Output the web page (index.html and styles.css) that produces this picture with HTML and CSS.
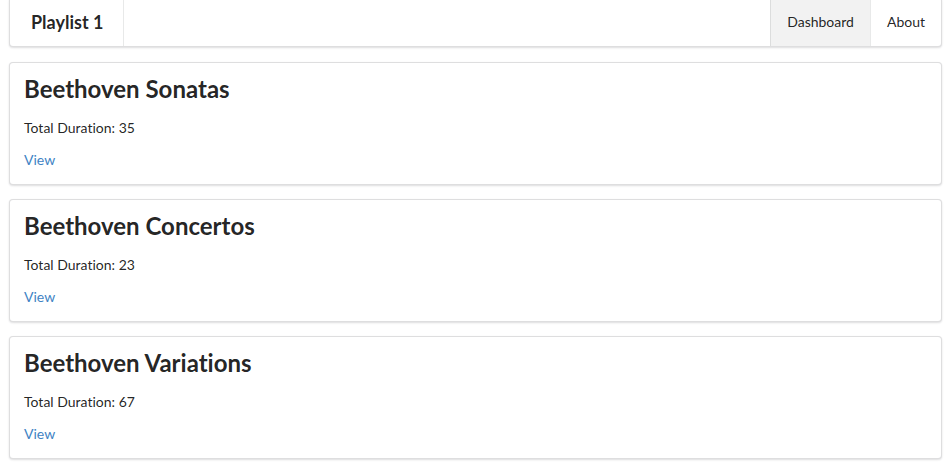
FILE: index.html
```html
<!DOCTYPE html>
<html lang="en">
<head>
  <meta charset="UTF-8">
  <meta name="viewport" content="width=device-width, initial-scale=1.0">
  <title>Playlist 1</title>
  <link rel="stylesheet" href="styles.css">
</head>
<body>
  <nav class="menu">
    <a class="item header-item" href="#">Playlist 1</a>
    <div class="menu-right">
      <a class="item active" href="#">Dashboard</a>
      <a class="item" href="#">About</a>
    </div>
  </nav>

  <!-- One segment per playlist -->
  <section class="segment">
    <h2 class="title">Beethoven Sonatas</h2>
    <p class="duration">Total Duration: 35</p>
    <a class="link" href="#">View</a>
  </section>

  <section class="segment">
    <h2 class="title">Beethoven Concertos</h2>
    <p class="duration">Total Duration: 23</p>
    <a class="link" href="#">View</a>
  </section>

  <section class="segment">
    <h2 class="title">Beethoven Variations</h2>
    <p class="duration">Total Duration: 67</p>
    <a class="link" href="#">View</a>
  </section>
</body>
</html>
```

FILE: styles.css
```css
body {
  margin: 0;
  padding: 0 8px 0 9px;
  background: #fff;
  font-family: Lato, "Helvetica Neue", Arial, sans-serif;
  font-size: 14px;
  line-height: 1.4285em;
  color: rgba(0,0,0,0.87);
  font-variant-ligatures: none;
}
.menu {
  display: flex;
  margin: -3px 0 15px;
  background: #fff;
  border: 1px solid rgba(34,36,38,0.15);
  border-radius: 4px;
  box-shadow: 0 1px 2px 0 rgba(34,36,38,0.15);
}
.menu-right {
  display: flex;
  margin-left: auto;
}
.item {
  display: flex;
  align-items: center;
  height: 48px;
  padding: 0 16px;
  line-height: 1;
  color: rgba(0,0,0,0.87);
  text-decoration: none;
}
.header-item {
  font-size: 18px;
  font-weight: 700;
  padding: 0 20px 0 21px;
  border-right: 1px solid rgba(34,36,38,0.1);
}
.menu-right .item {
  border-left: 1px solid rgba(34,36,38,0.1);
}
.item.active {
  background: rgba(0,0,0,0.05);
}
.segment {
  margin-bottom: 14px;
  padding: 14px;
  background: #fff;
  border: 1px solid rgba(34,36,38,0.15);
  border-radius: 4px;
  box-shadow: 0 1px 2px 0 rgba(34,36,38,0.15);
}
.title {
  margin: -3px 0 13px;
  font-size: 24px;
  font-weight: 700;
  line-height: 1.28571em;
}
.duration {
  margin: 0 0 12px;
}
.link {
  display: block;
  color: #4183c4;
  text-decoration: none;
}
```
